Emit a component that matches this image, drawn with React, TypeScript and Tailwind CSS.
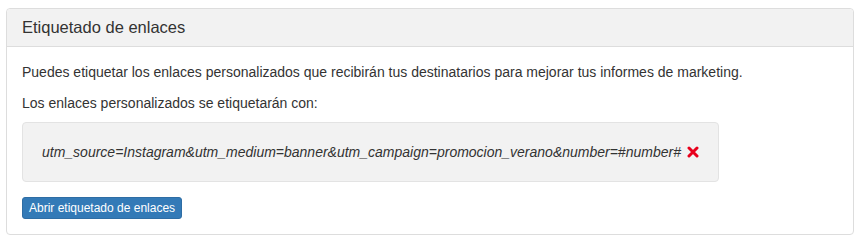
export default function App() {
  return (
    <div
      className="w-[863px] h-[246px] bg-white pt-2 pl-[6px] pr-[9px] text-[#333]"
      style={{ fontFamily: '"Liberation Sans", Arial, sans-serif' }}
    >
      <section className="border border-[#dddddd] rounded-[4px] bg-white h-[227px] flex flex-col">
        <div className="h-[38px] bg-[#f2f2f2] border-b border-[#dddddd] rounded-t-[4px] flex items-center px-[15px]">
          <h3 className="text-[16.5px] leading-none text-[#333]">Etiquetado de enlaces</h3>
        </div>
        <div className="px-[15px] pt-[15px]">
          <p className="text-[14px] leading-[20px]">
            Puedes etiquetar los enlaces personalizados que recibirán tus destinatarios para mejorar tus informes de marketing.
          </p>
          <p className="text-[14px] leading-[20px] mt-[11px]">
            Los enlaces personalizados se etiquetarán con:
          </p>
          <div className="mt-[9px] w-[697px] h-[60px] bg-[#f2f2f2] border border-[#e3e3e3] rounded-[4px] flex items-center pl-[19px]">
            <span className="italic text-[14px] leading-none text-[#333]">
              utm_source=Instagram&amp;utm_medium=banner&amp;utm_campaign=promocion_verano&amp;number=#number#
            </span>
            <svg className="ml-[6px]" width="12" height="12" viewBox="0 0 12 12">
              <path d="M2 2 L10 10 M10 2 L2 10" stroke="#e8001c" strokeWidth="3" strokeLinecap="round" />
            </svg>
          </div>
          <button className="mt-[15px] h-[22px] px-[6px] bg-[#337ab7] border border-[#2e6da4] rounded-[3px] text-white text-[12px] leading-[18px]">
            Abrir etiquetado de enlaces
          </button>
        </div>
      </section>
    </div>
  );
}
